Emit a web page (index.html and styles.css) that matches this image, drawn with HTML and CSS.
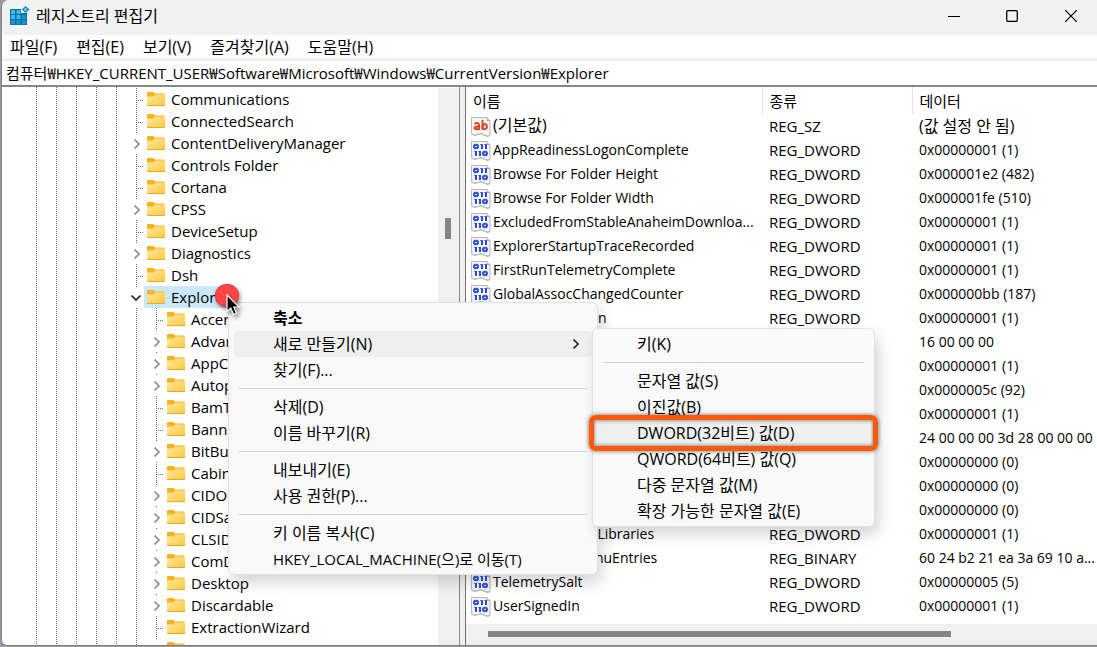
FILE: index.html
```
<!DOCTYPE html>
<html lang="ko">
<head>
<meta charset="utf-8">
<title>레지스트리 편집기</title>
<link rel="stylesheet" href="styles.css">
</head>
<body>
<svg class="defs" aria-hidden="true">
  <defs>
    <linearGradient id="fold" x1="0" y1="0" x2="1" y2="1"><stop offset="0" stop-color="#ffe9a4"/><stop offset="1" stop-color="#ffc83a"/></linearGradient>
    <symbol id="folder" viewBox="0 0 18 14">
      <path d="M0 1a1 1 0 0 1 1-1h5.5L8 1.500H17.500V5H0z" fill="#f8b31c"/>
      <path d="M0 4.500H6.500L8 2.500H18V14H0z" fill="url(#fold)"/>
      <path d="M0 13.500H18" stroke="#e9aa2c"/>
    </symbol>
    <symbol id="right" viewBox="0 0 8 12"><path d="M1.500 1.500L6 6L1.500 10.500" fill="none" stroke="currentColor" stroke-width="1.700"/></symbol>
    <symbol id="down" viewBox="0 0 12 8"><path d="M1.500 1.500L6 6L10.500 1.500" fill="none" stroke="currentColor" stroke-width="1.700"/></symbol>
    <symbol id="sheet" viewBox="0 0 20 20">
      <path d="M.5.5H16l3 3V18.500c-2 1-4 .8-6-.5s-4-1.500-6-.5-4 .8-6.500-.500z" fill="#f4f4f5" stroke="#b5b7ba"/>
      <path d="M16 .5V3.500H19" fill="#ddd" stroke="#a9abae"/>
      <path d="M1 16.800c2.500 1 4 1.300 6 .2s4-.8 6 .500 4 1.300 6 .5v1c-2 1-4 .8-6-.5s-4-1.500-6-.5-4 .8-6-.200z" fill="#b4b5b8"/>
    </symbol>
    <symbol id="str" viewBox="0 0 20 20">
      <use href="#sheet"/>
      <g fill="none" stroke="#dc4a28" stroke-width="2"><path d="M3.500 6.800C5 5.800 8 5.500 8 8V13M8 9.500C5 9.300 3.500 9.800 3.500 11.200S6.500 12.800 8 10.800M11.500 3V13"/><ellipse cx="13.700" cy="9.500" rx="2.200" ry="2.600"/></g>
    </symbol>
    <symbol id="bin" viewBox="0 0 20 20">
      <use href="#sheet"/>
      <g fill="none" stroke="#2c4fd8" stroke-width="2"><ellipse cx="5" cy="5.500" rx="2" ry="1.700"/><path d="M11 3V8M15 3V8M5 10V15M9 10V15"/><path d="M9.300 3.500H11M13.500 3.500H15M3.300 10.500H5M7.500 10.500H9" stroke-width="1"/><ellipse cx="14" cy="12.500" rx="2" ry="1.700"/></g>
    </symbol>
  </defs>
</svg>

<div class="window">
  <header class="titlebar">
    <svg class="appicon" viewBox="0 0 20 20" aria-hidden="true">
      <path d="M0 3H11V7H17V19H0z" fill="#0b6fa8"/>
      <g fill="#35bdf0"><path d="M1 4h4v4H1zM6.500 4h4v4h-4zM1 9h4v4H1zM6.500 9h4v4h-4z"/></g>
      <g fill="#1595d3"><path d="M12 9h4v4h-4zM1 14.200h4v4H1zM6.500 14.200h4v4h-4zM12 14.200h4v4h-4z"/></g>
      <path d="M15.500 0L19.500 3.500L15.500 7L11.800 3.500z" fill="#1686c0"/><path d="M15.500 1.800L17.500 3.500L15.500 5.200L13.700 3.500z" fill="#6bd0f5"/>
    </svg>
    <h1 class="title">레지스트리 편집기</h1>
    <div class="controls">
      <button class="control" aria-label="최소화"><svg width="12" height="12"><path d="M0 6.500H12" stroke="#000"/></svg></button>
      <button class="control" aria-label="최대화"><svg width="12" height="12"><rect x=".7" y=".7" width="10.600" height="10.600" rx="1" fill="none" stroke="#000" stroke-width="1.300"/></svg></button>
      <button class="control" aria-label="닫기"><svg width="12" height="12"><path d="M0 0L12 12M12 0L0 12" stroke="#000" stroke-width="1.200"/></svg></button>
    </div>
  </header>
  <nav class="menubar">
    <button>파일(F)</button><button>편집(E)</button><button>보기(V)</button><button>즐겨찾기(A)</button><button>도움말(H)</button>
  </nav>
  <input class="address" aria-label="주소" value="컴퓨터₩HKEY_CURRENT_USER₩Software₩Microsoft₩Windows₩CurrentVersion₩Explorer">

  <main class="panes">
    <section class="treepane">
      <ul class="tree">
        <li class="leaf"><button class="key"><svg><use href="#folder"/></svg>Communications</button></li>
        <li class="leaf"><button class="key"><svg><use href="#folder"/></svg>ConnectedSearch</button></li>
        <li class="branch"><svg class="twist"><use href="#right"/></svg><button class="key"><svg><use href="#folder"/></svg>ContentDeliveryManager</button></li>
        <li class="leaf"><button class="key"><svg><use href="#folder"/></svg>Controls Folder</button></li>
        <li class="leaf"><button class="key"><svg><use href="#folder"/></svg>Cortana</button></li>
        <li class="branch"><svg class="twist"><use href="#right"/></svg><button class="key"><svg><use href="#folder"/></svg>CPSS</button></li>
        <li class="leaf"><button class="key"><svg><use href="#folder"/></svg>DeviceSetup</button></li>
        <li class="branch"><svg class="twist"><use href="#right"/></svg><button class="key"><svg><use href="#folder"/></svg>Diagnostics</button></li>
        <li class="leaf"><button class="key"><svg><use href="#folder"/></svg>Dsh</button></li>
        <li class="branch"><svg class="twist open"><use href="#down"/></svg><button class="key selected"><svg><use href="#folder"/></svg>Explorer</button></li>
      </ul>
      <ul class="tree sub">
        <li class="leaf"><button class="key"><svg><use href="#folder"/></svg>Accent</button></li>
        <li class="branch"><svg class="twist"><use href="#right"/></svg><button class="key"><svg><use href="#folder"/></svg>Advanced</button></li>
        <li class="branch"><svg class="twist"><use href="#right"/></svg><button class="key"><svg><use href="#folder"/></svg>AppContract</button></li>
        <li class="branch"><svg class="twist"><use href="#right"/></svg><button class="key"><svg><use href="#folder"/></svg>Autoplay</button></li>
        <li class="leaf"><button class="key"><svg><use href="#folder"/></svg>BamThrottling</button></li>
        <li class="leaf"><button class="key"><svg><use href="#folder"/></svg>BannerStore</button></li>
        <li class="branch"><svg class="twist"><use href="#right"/></svg><button class="key"><svg><use href="#folder"/></svg>BitBucket</button></li>
        <li class="leaf"><button class="key"><svg><use href="#folder"/></svg>CabinetState</button></li>
        <li class="branch"><svg class="twist"><use href="#right"/></svg><button class="key"><svg><use href="#folder"/></svg>CIDOpen</button></li>
        <li class="branch"><svg class="twist"><use href="#right"/></svg><button class="key"><svg><use href="#folder"/></svg>CIDSave</button></li>
        <li class="branch"><svg class="twist"><use href="#right"/></svg><button class="key"><svg><use href="#folder"/></svg>CLSID</button></li>
        <li class="branch"><svg class="twist"><use href="#right"/></svg><button class="key"><svg><use href="#folder"/></svg>ComDlg32</button></li>
        <li class="branch"><svg class="twist"><use href="#right"/></svg><button class="key"><svg><use href="#folder"/></svg>Desktop</button></li>
        <li class="branch"><svg class="twist"><use href="#right"/></svg><button class="key"><svg><use href="#folder"/></svg>Discardable</button></li>
        <li class="leaf"><button class="key"><svg><use href="#folder"/></svg>ExtractionWizard</button></li>
        <li class="branch"><button class="key" aria-label="FeatureUsage"><svg><use href="#folder"/></svg></button></li>
      </ul>
      <div class="vbar"><div class="vthumb"></div></div>
    </section>

    <section class="listpane">
      <table class="values">
        <colgroup><col class="cname"><col class="ctype"><col></colgroup>
        <thead><tr><th>이름</th><th>종류</th><th>데이터</th></tr></thead>
        <tbody>
          <tr class="unset"><td><svg><use href="#str"/></svg>(기본값)</td><td>REG_SZ</td><td>(값 설정 안 됨)</td></tr>
          <tr><td><svg><use href="#bin"/></svg>AppReadinessLogonComplete</td><td>REG_DWORD</td><td>0x00000001 (1)</td></tr>
          <tr><td><svg><use href="#bin"/></svg>Browse For Folder Height</td><td>REG_DWORD</td><td>0x000001e2 (482)</td></tr>
          <tr><td><svg><use href="#bin"/></svg>Browse For Folder Width</td><td>REG_DWORD</td><td>0x000001fe (510)</td></tr>
          <tr><td><svg><use href="#bin"/></svg>ExcludedFromStableAnaheimDownloa...</td><td>REG_DWORD</td><td>0x00000001 (1)</td></tr>
          <tr><td><svg><use href="#bin"/></svg>ExplorerStartupTraceRecorded</td><td>REG_DWORD</td><td>0x00000001 (1)</td></tr>
          <tr><td><svg><use href="#bin"/></svg>FirstRunTelemetryComplete</td><td>REG_DWORD</td><td>0x00000001 (1)</td></tr>
          <tr><td><svg><use href="#bin"/></svg>GlobalAssocChangedCounter</td><td>REG_DWORD</td><td>0x000000bb (187)</td></tr>
          <tr><td><svg><use href="#bin"/></svg>LocalsPinnedIcon</td><td>REG_DWORD</td><td>0x00000001 (1)</td></tr>
          <tr><td><svg><use href="#bin"/></svg></td><td></td><td>16 00 00 00</td></tr>
          <tr><td><svg><use href="#bin"/></svg></td><td></td><td>0x00000001 (1)</td></tr>
          <tr><td><svg><use href="#bin"/></svg></td><td></td><td>0x0000005c (92)</td></tr>
          <tr><td><svg><use href="#bin"/></svg></td><td></td><td>0x00000001 (1)</td></tr>
          <tr><td><svg><use href="#bin"/></svg></td><td></td><td>24 00 00 00 3d 28 00 00 00</td></tr>
          <tr><td><svg><use href="#bin"/></svg></td><td></td><td>0x00000000 (0)</td></tr>
          <tr><td><svg><use href="#bin"/></svg></td><td></td><td>0x00000000 (0)</td></tr>
          <tr><td><svg><use href="#bin"/></svg></td><td></td><td>0x00000000 (0)</td></tr>
          <tr><td><svg><use href="#bin"/></svg>SIDsUpdatedOnLibraries</td><td>REG_DWORD</td><td>0x00000001 (1)</td></tr>
          <tr><td><svg><use href="#bin"/></svg>SlowContextMenuEntries</td><td>REG_BINARY</td><td>60 24 b2 21 ea 3a 69 10 a...</td></tr>
          <tr><td><svg><use href="#bin"/></svg>TelemetrySalt</td><td>REG_DWORD</td><td>0x00000005 (5)</td></tr>
          <tr><td><svg><use href="#bin"/></svg>UserSignedIn</td><td>REG_DWORD</td><td>0x00000001 (1)</td></tr>
        </tbody>
      </table>
      <div class="hbar"><div class="hthumb"></div></div>
    </section>
  </main>
</div>

<div class="menu context">
  <button class="strong">축소</button>
  <button class="hot">새로 만들기(N)<svg><use href="#right"/></svg></button>
  <button>찾기(F)...</button>
  <hr>
  <button>삭제(D)</button>
  <button>이름 바꾸기(R)</button>
  <hr>
  <button>내보내기(E)</button>
  <button>사용 권한(P)...</button>
  <hr>
  <button>키 이름 복사(C)</button>
  <button class="goto">HKEY_LOCAL_MACHINE(으)로 이동(T)</button>
</div>
<div class="menu submenu">
  <button>키(K)</button>
  <hr>
  <button>문자열 값(S)</button>
  <button>이진값(B)</button>
  <button class="hot">DWORD(32비트) 값(D)</button>
  <button>QWORD(64비트) 값(Q)</button>
  <button>다중 문자열 값(M)</button>
  <button>확장 가능한 문자열 값(E)</button>
</div>
<div class="marker"></div>
<div class="dot"></div>
<svg class="cursor" viewBox="0 0 14 22" aria-hidden="true"><path d="M1 1V17.500L4.800 14L7.500 20.500L10.500 19.200L7.800 13H13z" fill="#000" stroke="#fff" stroke-width="1.200"/></svg>
</body>
</html>
```
FILE: styles.css
```
* { box-sizing: border-box; }
body {
  margin: 0;
  background: #9b9b9e;
  color: #000;
  font: 15px/20px "Open Sans", "Noto Sans CJK KR", sans-serif;
  overflow: hidden;
}
button {
  border: 0;
  margin: 0;
  padding: 0;
  background: none;
  color: inherit;
  font: inherit;
  text-align: left;
  white-space: nowrap;
}
.defs { position: absolute; width: 0; height: 0; }

.window {
  display: flex;
  flex-direction: column;
  height: calc(100vh - 1px);
  margin-left: 1px;
  border-left: 1px solid #7d8287;
  border-bottom: 1px solid #7d7d82;
  border-radius: 8px 0 0 6px;
  background: #fff;
  overflow: hidden;
}
.titlebar {
  display: flex;
  align-items: center;
  height: 35px;
  flex: none;
  padding: 0 0 4px 8px;
  background: #f2f2f2;
}
.appicon { width: 20px; height: 20px; }
.title { margin: 0 0 0 6px; font-size: 16px; font-weight: 400; line-height: 24px; }
.controls { display: flex; margin-left: auto; }
.control {
  display: flex;
  align-items: center;
  justify-content: center;
  width: 58px;
  height: 31px;
}
.control:last-child { width: 56px; padding-left: 4px; }
.control svg { display: block; }

.menubar { display: flex; flex: none; gap: 19px; height: 23px; padding-left: 8px; }
.menubar button { padding-top: 1px; line-height: 22px; font-size: 16px; }
.address {
  flex: none;
  width: 100%;
  height: 29px;
  margin: 0;
  padding: 0 4px 2px;
  border: solid #f0f0f0;
  border-width: 3px 0 0;
  border-bottom: 2px solid #82878c;
  background: #fff;
  color: #000;
  font: inherit;
}

.panes { display: flex; flex: 1; min-height: 0; }
.treepane {
  position: relative;
  flex: none;
  width: 458px;
  padding-top: 1px;
  border-right: 1px solid #82878c;
  overflow: hidden;
  --dots: linear-gradient(#6b6b6b 1px, transparent 1px);
  background:
    var(--dots) 34px 0 / 1px 2px repeat-y,
    var(--dots) 54px 0 / 1px 2px repeat-y,
    var(--dots) 74px 0 / 1px 2px repeat-y,
    var(--dots) 94px 0 / 1px 2px repeat-y,
    var(--dots) 114px 0 / 1px 2px repeat-y;
}
.tree { margin: 0; padding: 0 0 0 124px; list-style: none; }
.tree li { display: flex; height: 22px; }
.tree .leaf::before {
  content: "";
  width: 18px;
  background:
    var(--dots) 10px 0 / 1px 2px repeat-y,
    linear-gradient(90deg, transparent 12px, #6b6b6b 12px 13px, transparent 13px 14px, #6b6b6b 14px 15px, transparent 15px 16px, #6b6b6b 16px 17px, transparent 17px) 0 12px / 18px 1px no-repeat;
}
.tree .branch {
  padding-left: 18px;
  background: linear-gradient(#6b6b6b, #6b6b6b) 10px 0 / 1px 1px no-repeat;
}
.sub {
  padding-left: 144px;
  background: var(--dots) 134px 0 / 1px 2px repeat-y;
}
.twist { width: 8px; height: 12px; margin: 6px 3px 0 -11px; color: #8a8a8a; }
.twist.open { width: 12px; height: 8px; margin: 8px 2px 0 -14px; color: #222; }
.key {
  display: flex;
  align-items: center;
  gap: 6px;
  height: 22px;
  padding: 0 4px 0 3px;
}
.key svg { width: 18px; height: 14px; }
.selected { background: #cce8ff; }
.vbar {
  position: absolute;
  inset: 1px 0 0 auto;
  width: 21px;
  padding: 130px 8px 0 7px;
  background: #f0f0f0;
}
.vthumb { height: 21px; background: #858585; }

.listpane {
  display: flex;
  flex-direction: column;
  flex: 1;
  min-width: 0;
  margin-left: 5px;
  border-left: 1px solid #6d7277;
  box-shadow: -5px 0 #f0f0f0;
}
.values { width: 100%; table-layout: fixed; border-collapse: collapse; }
.cname { width: 296px; }
.ctype { width: 150px; }
.values th {
  height: 27px;
  padding: 0 7px;
  border-right: 1px solid #e5e5e5;
  font-weight: 400;
  text-align: left;
}
.values th:last-child { border-right: 0; }
.values td {
  height: 24px;
  padding: 0 0 0 7px;
  font-size: 14px;
  white-space: nowrap;
  overflow: hidden;
}
.values td:nth-child(2) { font-size: 15px; }
.values .unset td { font-size: 16px; }
.values .unset td:nth-child(2) { font-size: 15px; }
.values td:first-child { padding-left: 5px; }
.values td svg { width: 20px; height: 20px; margin-right: 2px; vertical-align: -6px; }
.hbar { margin-top: auto; height: 21px; padding: 7px 146px 8px 22px; background: #f0f0f0; }
.hthumb { height: 6px; background: #858585; }

.menu {
  position: absolute;
  padding: 2px 5px;
  border: 1px solid #e2e2e2;
  border-radius: 6px;
  background: #f9f9f9;
  box-shadow: 4px 8px 14px rgba(0, 0, 0, .16);
}
.menu button {
  display: flex;
  align-items: center;
  justify-content: space-between;
  width: 100%;
  height: 26px;
  padding: 0 12px 0 39px;
  border-radius: 4px;
  font-size: 16px;
}
.menu button.hot { background: #efefef; }
.menu button.strong { font-weight: 700; }
.menu button.goto { font-size: 15px; }
.menu svg { width: 8px; height: 12px; color: #222; }
.menu hr { height: 1px; margin: 5px; border: 0; background: #d5d5d5; }
.context { left: 228px; top: 302px; width: 370px; }
.submenu { left: 592px; top: 328px; width: 283px; }

.marker {
  position: absolute;
  left: 589px;
  top: 415px;
  width: 289px;
  height: 36px;
  border: 5px solid #fa5a0a;
  border-radius: 7px;
  box-shadow: 0 0 4px rgba(0, 0, 0, .6), inset 0 0 4px rgba(0, 0, 0, .6);
}
.dot {
  position: absolute;
  left: 215px;
  top: 284px;
  width: 24px;
  height: 23px;
  border: 1px solid #e23a3a;
  border-radius: 50%;
  background: #fe4545;
  box-shadow: 1px 2px 4px rgba(0, 0, 0, .5);
}
.cursor {
  position: absolute;
  left: 226px;
  top: 294px;
  width: 14px;
  height: 22px;
  filter: drop-shadow(2px 3px 2px rgba(0, 0, 0, .45));
}
```
